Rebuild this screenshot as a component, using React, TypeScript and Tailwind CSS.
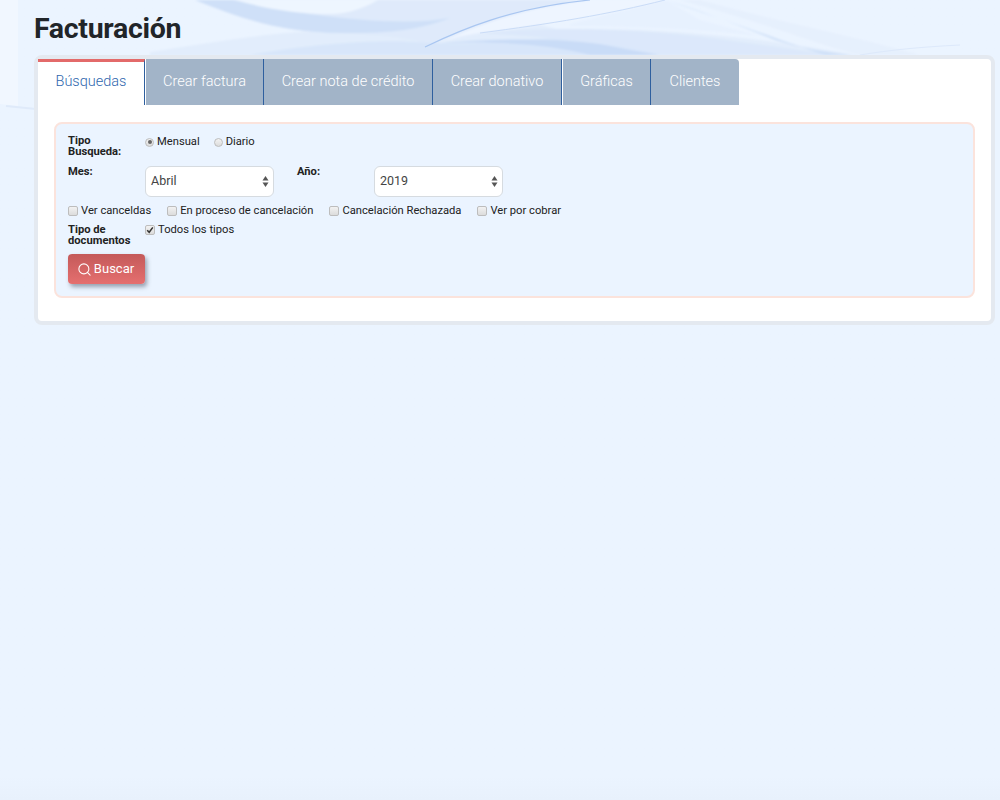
import { Search } from "lucide-react";

const tabs = [
  { label: "Crear factura", width: "w-[118px]" },
  { label: "Crear nota de crédito", width: "w-[169px]" },
  { label: "Crear donativo", width: "w-[129px]" },
];

function Waves() {
  return (
    <svg className="absolute left-0 top-0" width="1000" height="120" viewBox="0 0 1000 120" fill="none">
      <defs>
        <filter id="soft" x="-5%" y="-20%" width="110%" height="140%">
          <feGaussianBlur stdDeviation="0.8" />
        </filter>
      </defs>
      <path d="M0 0H18V106L0 104Z" fill="#f1f7ff" />
      <g filter="url(#soft)">
        {/* wide pale sheet under the title */}
        <path d="M150 52C230 40 300 26 400 30C450 30 480 22 500 14L560 30C640 26 760 36 860 56H150Z" fill="#e2edfc" />
        <path d="M195 0H600V4C540 6 490 16 430 46C400 32 350 36 300 30C260 26 225 12 195 0Z" fill="#dfeafb" />
        {/* dark ribbon from the top left */}
        <path d="M195 0C240 18 280 32 340 33C395 34 425 28 450 18C415 24 370 22 310 14C285 10 255 4 232 0Z" fill="#cfe0f8" />
        <path d="M235 0C270 10 300 14 330 14C350 14 368 6 378 0Z" fill="#eef6ff" />
        {/* bright sheet between the two lines */}
        <path d="M432 46C470 28 520 8 590 0H665C610 14 550 24 480 33C460 36 445 40 432 46Z" fill="#eef5ff" />
        <path d="M570 24L665 0C680 8 690 14 700 20L760 36C690 28 620 26 570 26Z" fill="#e7f1fe" />
        {/* low ribbons */}
        <path d="M250 55C310 44 380 38 430 43C480 46 530 38 590 36C640 42 650 50 680 55Z" fill="#d8e6fa" />
        <path d="M430 44C470 40 540 36 600 44C620 48 640 52 660 55H590C550 44 490 40 430 44Z" fill="#c9dcf7" />
        <path d="M480 33C570 25 660 30 740 42C780 47 810 52 840 55H660C620 44 540 36 480 33Z" fill="#dce8fb" />
        {/* ribbon falling on the right */}
        <path d="M665 0C700 10 740 26 775 40C800 48 825 52 850 55H825C780 40 720 18 665 0Z" fill="#cfe0f8" />
        <path d="M700 0C780 22 860 38 920 55H860C820 46 770 24 680 0Z" fill="#e4eefc" opacity="0.7" />
      </g>
      <path d="M425 47C460 30 510 8 590 0" stroke="#a9c6f1" strokeWidth="1.2" />
      <path d="M480 33C550 24 610 14 665 0" stroke="#cadcf7" strokeWidth="1" />
      <path d="M860 55C890 50 920 47 960 45" stroke="#dde9fb" strokeWidth="1" />
      <path d="M6 106L36 109" stroke="#dfeafa" strokeWidth="2" />
    </svg>
  );
}

function Check({ label, checked = false }: { label: string; checked?: boolean }) {
  return (
    <label className="flex items-center gap-[3px]">
      <span className="flex h-[10px] w-[10px] items-center justify-center rounded-[2px] border border-[#bdbdbd] bg-gradient-to-b from-[#f2f2f2] to-[#dcdcdc]">
        {checked && (
          <svg width="8" height="8" viewBox="0 0 8 8" fill="none">
            <path d="M1.2 4.2L3.2 6.3L6.8 1.4" stroke="#333" strokeWidth="1.5" />
          </svg>
        )}
      </span>
      <span>{label}</span>
    </label>
  );
}

function Radio({ label, checked = false }: { label: string; checked?: boolean }) {
  return (
    <label className="flex items-center gap-[3px]">
      <span className="flex h-[9px] w-[9px] items-center justify-center rounded-full border border-[#bdbdbd] bg-gradient-to-b from-[#f2f2f2] to-[#dcdcdc]">
        {checked && <span className="h-[4px] w-[4px] rounded-full bg-[#666]" />}
      </span>
      <span>{label}</span>
    </label>
  );
}

function SelectBox({ value }: { value: string }) {
  return (
    <div className="flex h-[31px] w-[129px] items-center justify-between rounded-[6px] border border-[#d6dbe0] bg-white pl-[5px] pr-[4px] text-[12.5px] text-[#444]">
      <span>{value}</span>
      <svg width="7" height="13" viewBox="0 0 7 13" fill="#555">
        <path d="M3.5 1L6.5 5.5H0.5Z" />
        <path d="M3.5 12L6.5 7.5H0.5Z" />
      </svg>
    </div>
  );
}

export default function App() {
  return (
    <div className="relative h-[800px] w-[1000px] overflow-hidden bg-gradient-to-b from-[#ebf4ff] from-[97%] to-[#e8f1fc] font-['Roboto',sans-serif]">
      <Waves />
      <div className="relative pl-[34px] pr-[5px] pt-[11px]">
        <h1 className="h-[44px] text-[28.5px] font-bold leading-[36px] tracking-[-0.3px] text-[#212529]">Facturación</h1>
        <div className="h-[270px] rounded-[8px] border-[4px] border-[#e4e9f0] bg-white">
          <div className="flex h-[46px] items-stretch">
            <div className="flex w-[107px] items-center justify-center border-r border-t-[3px] border-r-[#2f5f9e] border-t-[#e36a6a] pb-[3px] text-[14.5px] font-light text-[#2f67ae]">
              Búsquedas
            </div>
            <div className="w-px" />
            {tabs.map((tab) => (
              <div
                key={tab.label}
                className={`flex ${tab.width} items-center justify-center border-r border-[#2f5f9e] bg-[#a2b4c8] pb-[1px] text-[14.5px] font-light text-white`}
              >
                {tab.label}
              </div>
            ))}
            <div className="w-px" />
            <div className="flex w-[88px] items-center justify-center border-r border-[#2f5f9e] bg-[#a2b4c8] pb-[1px] text-[14.5px] font-light text-white">
              Gráficas
            </div>
            <div className="flex w-[88px] items-center justify-center rounded-tr-[4px] bg-[#a2b4c8] pb-[1px] text-[14.5px] font-light text-white">
              Clientes
            </div>
          </div>
          <div className="mx-[16px] mt-[17px] h-[176px] rounded-[8px] border-2 border-[#fbe3dc] bg-[#ebf4ff] px-[12px] pt-[11px] text-[11.2px] text-[#222]">
            <div className="flex h-[31px]">
              <div className="w-[77px] font-bold leading-[11px]">
                Tipo
                <br />
                Busqueda:
              </div>
              <div className="mt-[1px] flex h-[12px] items-center gap-[14px]">
                <Radio label="Mensual" checked />
                <Radio label="Diario" />
              </div>
            </div>
            <div className="flex h-[37px]">
              <div className="w-[77px] font-bold leading-[11px]">Mes:</div>
              <SelectBox value="Abril" />
              <div className="ml-[23px] w-[77px] font-bold leading-[11px]">Año:</div>
              <SelectBox value="2019" />
            </div>
            <div className="flex h-[21px] items-start gap-[16px] pt-[1px] leading-[13px]">
              <Check label="Ver canceldas" />
              <Check label="En proceso de cancelación" />
              <Check label="Cancelación Rechazada" />
              <Check label="Ver por cobrar" />
            </div>
            <div className="flex h-[30px]">
              <div className="w-[77px] font-bold leading-[11px]">
                Tipo de
                <br />
                documentos
              </div>
              <div className="h-[12px] leading-[12px]">
                <Check label="Todos los tipos" checked />
              </div>
            </div>
            <button className="flex h-[30px] w-[77px] items-center justify-center gap-[2px] rounded-[4px] bg-gradient-to-b from-[#c45a5a] to-[#e56f6f] pr-[2px] text-[13px] text-white shadow-[2px_3px_4px_rgba(70,80,100,0.5)]">
              <Search size={15} strokeWidth={1.7} />
              Buscar
            </button>
          </div>
        </div>
      </div>
    </div>
  );
}
